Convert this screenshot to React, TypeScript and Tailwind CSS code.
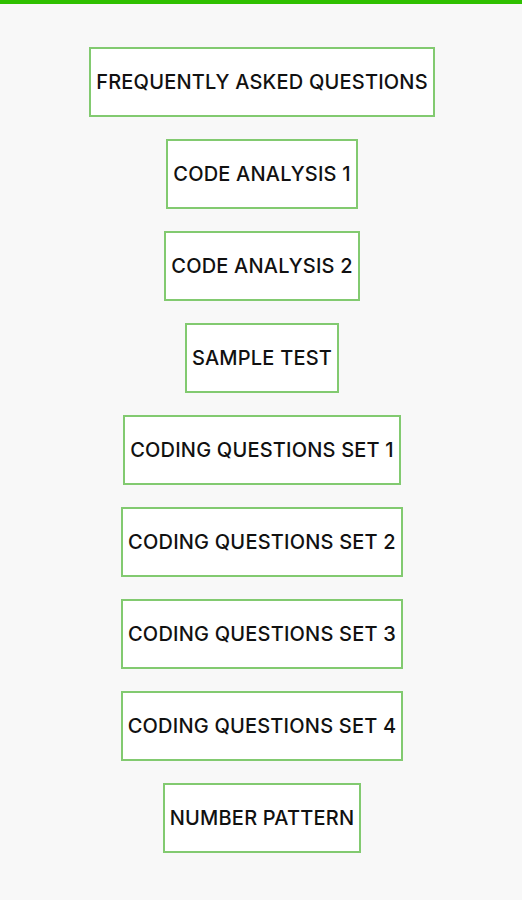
const items = [
  "FREQUENTLY ASKED QUESTIONS",
  "CODE ANALYSIS 1",
  "CODE ANALYSIS 2",
  "SAMPLE TEST",
  "CODING QUESTIONS SET 1",
  "CODING QUESTIONS SET 2",
  "CODING QUESTIONS SET 3",
  "CODING QUESTIONS SET 4",
  "NUMBER PATTERN",
];

export default function App() {
  return (
    <div className="min-h-[900px] w-[522px] bg-[#f8f8f8] font-['Inter',sans-serif]">
      <div className="h-1 w-full bg-[#2fc000]" />
      <div className="flex flex-col items-center gap-[22px] pl-[2px] pt-[43px]">
        {items.map((label) => (
          <button
            key={label}
            className="flex h-[70px] items-center justify-center border-2 border-[#82ca70] bg-white px-[5px] text-[20px] font-medium tracking-[0.2px] text-[#111]"
          >
            {label}
          </button>
        ))}
      </div>
    </div>
  );
}
